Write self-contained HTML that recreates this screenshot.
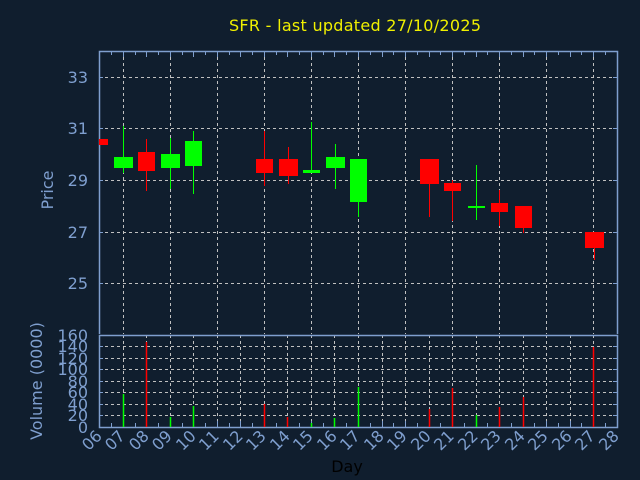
<!DOCTYPE html>
<html><head><meta charset="utf-8"><style>
html,body{margin:0;padding:0;background:#101e2e;}
svg{display:block;font-family:"DejaVu Sans","Liberation Sans",sans-serif;}
</style></head><body>
<svg width="640" height="480" viewBox="0 0 640 480" xmlns="http://www.w3.org/2000/svg">
<rect width="640" height="480" fill="#101e2e"/>
<text x="355" y="31" fill="#f0f000" font-size="16" text-anchor="middle" textLength="252">SFR - last updated 27/10/2025</text>

<!-- price grid -->
<g stroke="#c0c0c0" stroke-width="1" stroke-dasharray="3,3" fill="none">
<line x1="99" y1="77.5" x2="617" y2="77.5"/>
<line x1="99" y1="128.5" x2="617" y2="128.5"/>
<line x1="99" y1="180.5" x2="617" y2="180.5"/>
<line x1="99" y1="232.5" x2="617" y2="232.5"/>
<line x1="99" y1="283.5" x2="617" y2="283.5"/>
<line x1="123.5" y1="51" x2="123.5" y2="334"/>
<line x1="170.5" y1="51" x2="170.5" y2="334"/>
<line x1="217.5" y1="51" x2="217.5" y2="334"/>
<line x1="264.5" y1="51" x2="264.5" y2="334"/>
<line x1="311.5" y1="51" x2="311.5" y2="334"/>
<line x1="358.5" y1="51" x2="358.5" y2="334"/>
<line x1="405.5" y1="51" x2="405.5" y2="334"/>
<line x1="452.5" y1="51" x2="452.5" y2="334"/>
<line x1="499.5" y1="51" x2="499.5" y2="334"/>
<line x1="546.5" y1="51" x2="546.5" y2="334"/>
<line x1="593.5" y1="51" x2="593.5" y2="334"/>
</g>
<!-- volume grid -->
<g stroke="#c0c0c0" stroke-width="1" stroke-dasharray="3,3" fill="none">
<line x1="99" y1="346.5" x2="617" y2="346.5"/>
<line x1="99" y1="358.5" x2="617" y2="358.5"/>
<line x1="99" y1="369.5" x2="617" y2="369.5"/>
<line x1="99" y1="381.5" x2="617" y2="381.5"/>
<line x1="99" y1="392.5" x2="617" y2="392.5"/>
<line x1="99" y1="404.5" x2="617" y2="404.5"/>
<line x1="99" y1="415.5" x2="617" y2="415.5"/>
<line x1="123.5" y1="335" x2="123.5" y2="427"/><line x1="146.5" y1="335" x2="146.5" y2="427"/>
<line x1="170.5" y1="335" x2="170.5" y2="427"/><line x1="193.5" y1="335" x2="193.5" y2="427"/>
<line x1="217.5" y1="335" x2="217.5" y2="427"/><line x1="240.5" y1="335" x2="240.5" y2="427"/>
<line x1="264.5" y1="335" x2="264.5" y2="427"/><line x1="287.5" y1="335" x2="287.5" y2="427"/>
<line x1="311.5" y1="335" x2="311.5" y2="427"/><line x1="334.5" y1="335" x2="334.5" y2="427"/>
<line x1="358.5" y1="335" x2="358.5" y2="427"/><line x1="382.5" y1="335" x2="382.5" y2="427"/>
<line x1="405.5" y1="335" x2="405.5" y2="427"/><line x1="429.5" y1="335" x2="429.5" y2="427"/>
<line x1="452.5" y1="335" x2="452.5" y2="427"/><line x1="476.5" y1="335" x2="476.5" y2="427"/>
<line x1="499.5" y1="335" x2="499.5" y2="427"/><line x1="523.5" y1="335" x2="523.5" y2="427"/>
<line x1="546.5" y1="335" x2="546.5" y2="427"/><line x1="570.5" y1="335" x2="570.5" y2="427"/>
<line x1="593.5" y1="335" x2="593.5" y2="427"/>
</g>

<!-- frames -->
<g stroke="#7f9fcf" stroke-width="1.5" fill="none">
<path d="M99.5 334 V51.5 H617.5 V334"/>
<path d="M99.5 427.5 V335.5 H617.5 V427.5 Z"/>
</g>
<g stroke="#7f9fcf" stroke-width="1">
<path d="M99 77.5h4M99 128.5h4M99 180.5h4M99 232.5h4M99 283.5h4M613 77.5h4M613 128.5h4M613 180.5h4M613 232.5h4M613 283.5h4"/>
<path d="M99 346.5h4M99 358.5h4M99 369.5h4M99 381.5h4M99 392.5h4M99 404.5h4M99 415.5h4M613 346.5h4M613 358.5h4M613 369.5h4M613 381.5h4M613 392.5h4M613 404.5h4M613 415.5h4"/>
<path d="M111.5 51v4M135.5 51v4M158.5 51v4M182.5 51v4M205.5 51v4M229.5 51v4M252.5 51v4M276.5 51v4M299.5 51v4M323.5 51v4M346.5 51v4M370.5 51v4M393.5 51v4M417.5 51v4M440.5 51v4M464.5 51v4M487.5 51v4M511.5 51v4M534.5 51v4M558.5 51v4M581.5 51v4M605.5 51v4"/>
<path d="M123.5 51v6M146.5 51v6M170.5 51v6M193.5 51v6M217.5 51v6M240.5 51v6M264.5 51v6M287.5 51v6M311.5 51v6M334.5 51v6M358.5 51v6M382.5 51v6M405.5 51v6M429.5 51v6M452.5 51v6M476.5 51v6M499.5 51v6M523.5 51v6M546.5 51v6M570.5 51v6M593.5 51v6"/>
<path d="M111.5 427v-4M135.5 427v-4M158.5 427v-4M182.5 427v-4M205.5 427v-4M229.5 427v-4M252.5 427v-4M276.5 427v-4M299.5 427v-4M323.5 427v-4M346.5 427v-4M370.5 427v-4M393.5 427v-4M417.5 427v-4M440.5 427v-4M464.5 427v-4M487.5 427v-4M511.5 427v-4M534.5 427v-4M558.5 427v-4M581.5 427v-4M605.5 427v-4"/>
<path d="M123.5 427v-6M146.5 427v-6M170.5 427v-6M193.5 427v-6M217.5 427v-6M240.5 427v-6M264.5 427v-6M287.5 427v-6M311.5 427v-6M334.5 427v-6M358.5 427v-6M382.5 427v-6M405.5 427v-6M429.5 427v-6M452.5 427v-6M476.5 427v-6M499.5 427v-6M523.5 427v-6M546.5 427v-6M570.5 427v-6M593.5 427v-6"/>
</g>

<!-- candles -->
<g stroke-width="1">
<rect x="99" y="139" width="9" height="6" fill="#ff0000"/>
<line x1="123.5" y1="126" x2="123.5" y2="173" stroke="#00ff00"/><rect x="114" y="157" width="19" height="11" fill="#00ff00"/>
<line x1="146.5" y1="139" x2="146.5" y2="191" stroke="#ff0000"/><rect x="138" y="152" width="17" height="19" fill="#ff0000"/>
<line x1="170.5" y1="138" x2="170.5" y2="189" stroke="#00ff00"/><rect x="161" y="154" width="19" height="14" fill="#00ff00"/>
<line x1="193.5" y1="131" x2="193.5" y2="194" stroke="#00ff00"/><rect x="185" y="141" width="17" height="25" fill="#00ff00"/>
<line x1="264.5" y1="131" x2="264.5" y2="186" stroke="#ff0000"/><rect x="256" y="159" width="17" height="14" fill="#ff0000"/>
<line x1="288.5" y1="147" x2="288.5" y2="184" stroke="#ff0000"/><rect x="279" y="159" width="19" height="17" fill="#ff0000"/>
<line x1="311.5" y1="122" x2="311.5" y2="173" stroke="#00ff00"/><rect x="303" y="170" width="17" height="3" fill="#00ff00"/>
<line x1="335.5" y1="144" x2="335.5" y2="189" stroke="#00ff00"/><rect x="326" y="157" width="19" height="11" fill="#00ff00"/>
<line x1="358.5" y1="159" x2="358.5" y2="217" stroke="#00ff00"/><rect x="350" y="159" width="17" height="43" fill="#00ff00"/>
<line x1="429.5" y1="159" x2="429.5" y2="217" stroke="#ff0000"/><rect x="420" y="159" width="19" height="25" fill="#ff0000"/>
<line x1="452.5" y1="180" x2="452.5" y2="221" stroke="#ff0000"/><rect x="444" y="183" width="17" height="8" fill="#ff0000"/>
<line x1="476.5" y1="165" x2="476.5" y2="220" stroke="#00ff00"/><rect x="468" y="206" width="17" height="2" fill="#00ff00"/>
<line x1="499.5" y1="190" x2="499.5" y2="226" stroke="#ff0000"/><rect x="491" y="203" width="17" height="9" fill="#ff0000"/>
<line x1="523.5" y1="206" x2="523.5" y2="233" stroke="#ff0000"/><rect x="515" y="206" width="17" height="22" fill="#ff0000"/>
<line x1="594.5" y1="232" x2="594.5" y2="260" stroke="#ff0000"/><rect x="585" y="232" width="19" height="16" fill="#ff0000"/>
</g>

<!-- volume bars -->
<g stroke-width="1.5">
<line x1="123.5" y1="394" x2="123.5" y2="427" stroke="#00ff00"/>
<line x1="146.5" y1="342" x2="146.5" y2="427" stroke="#ff0000"/>
<line x1="170.5" y1="417" x2="170.5" y2="427" stroke="#00ff00"/>
<line x1="193.5" y1="406" x2="193.5" y2="427" stroke="#00ff00"/>
<line x1="264.5" y1="404" x2="264.5" y2="427" stroke="#ff0000"/>
<line x1="287.5" y1="417" x2="287.5" y2="427" stroke="#ff0000"/>
<line x1="311.5" y1="423" x2="311.5" y2="427" stroke="#00ff00"/>
<line x1="334.5" y1="418" x2="334.5" y2="427" stroke="#00ff00"/>
<line x1="358.5" y1="387" x2="358.5" y2="427" stroke="#00ff00"/>
<line x1="429.5" y1="409" x2="429.5" y2="427" stroke="#ff0000"/>
<line x1="452.5" y1="388" x2="452.5" y2="427" stroke="#ff0000"/>
<line x1="476.5" y1="415" x2="476.5" y2="427" stroke="#00ff00"/>
<line x1="499.5" y1="407" x2="499.5" y2="427" stroke="#ff0000"/>
<line x1="523.5" y1="397" x2="523.5" y2="427" stroke="#ff0000"/>
<line x1="593.5" y1="347" x2="593.5" y2="427" stroke="#ff0000"/>
</g>

<!-- labels -->
<g fill="#7f9fcf" font-size="16" text-anchor="end">
<text x="88" y="83">33</text><text x="88" y="134">31</text><text x="88" y="186">29</text>
<text x="88" y="238">27</text><text x="88" y="289">25</text>
<text x="88" y="341">160</text><text x="88" y="352">140</text><text x="88" y="364">120</text>
<text x="88" y="375">100</text><text x="88" y="387">80</text><text x="88" y="398">60</text>
<text x="88" y="410">40</text><text x="88" y="421">20</text><text x="88" y="433">0</text>
</g>
<text transform="translate(53,190) rotate(-90)" fill="#7f9fcf" font-size="16" text-anchor="middle">Price</text>
<text transform="translate(42,381) rotate(-90)" fill="#7f9fcf" font-size="16" text-anchor="middle">Volume (0000)</text>
<text x="347" y="472" fill="#000" font-size="16" text-anchor="middle">Day</text>
<g fill="#7f9fcf" font-size="16" text-anchor="end">
<text transform="translate(103,437) rotate(-45)">06</text>
<text transform="translate(126,437) rotate(-45)">07</text>
<text transform="translate(150,437) rotate(-45)">08</text>
<text transform="translate(173,437) rotate(-45)">09</text>
<text transform="translate(197,437) rotate(-45)">10</text>
<text transform="translate(220,437) rotate(-45)">11</text>
<text transform="translate(244,437) rotate(-45)">12</text>
<text transform="translate(267,437) rotate(-45)">13</text>
<text transform="translate(291,437) rotate(-45)">14</text>
<text transform="translate(314,437) rotate(-45)">15</text>
<text transform="translate(338,437) rotate(-45)">16</text>
<text transform="translate(361,437) rotate(-45)">17</text>
<text transform="translate(385,437) rotate(-45)">18</text>
<text transform="translate(408,437) rotate(-45)">19</text>
<text transform="translate(432,437) rotate(-45)">20</text>
<text transform="translate(455,437) rotate(-45)">21</text>
<text transform="translate(479,437) rotate(-45)">22</text>
<text transform="translate(502,437) rotate(-45)">23</text>
<text transform="translate(526,437) rotate(-45)">24</text>
<text transform="translate(549,437) rotate(-45)">25</text>
<text transform="translate(573,437) rotate(-45)">26</text>
<text transform="translate(596,437) rotate(-45)">27</text>
<text transform="translate(620,437) rotate(-45)">28</text>
</g>
</svg>
</body></html>
